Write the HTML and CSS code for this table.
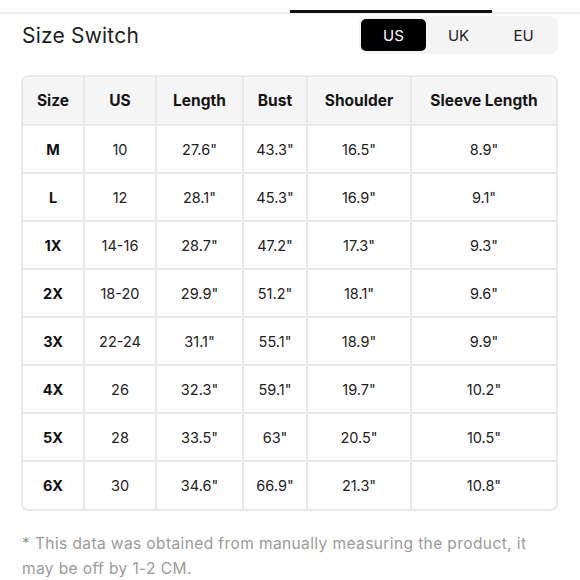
FILE: index.html
```html
<!DOCTYPE html>
<html>
<head>
<meta charset="utf-8">
<link rel="stylesheet" href="styles.css">
</head>
<body>
<div class="tabs"><div class="tab-indicator"></div></div>
<div class="head">
  <div class="title">Size Switch</div>
  <div class="switch">
    <span class="seg active">US</span>
    <span class="seg">UK</span>
    <span class="seg">EU</span>
  </div>
</div>
<div class="table-wrap">
  <table class="chart">
    <colgroup>
      <col class="c-size"><col class="c-us"><col class="c-len"><col class="c-bust"><col class="c-sh"><col class="c-sl">
    </colgroup>
    <thead>
      <tr><th>Size</th><th>US</th><th>Length</th><th>Bust</th><th>Shoulder</th><th>Sleeve Length</th></tr>
    </thead>
    <tbody>
      <tr><td class="sz">M</td><td>10</td><td>27.6"</td><td>43.3"</td><td>16.5"</td><td>8.9"</td></tr>
      <tr><td class="sz">L</td><td>12</td><td>28.1"</td><td>45.3"</td><td>16.9"</td><td>9.1"</td></tr>
      <tr><td class="sz">1X</td><td>14-16</td><td>28.7"</td><td>47.2"</td><td>17.3"</td><td>9.3"</td></tr>
      <tr><td class="sz">2X</td><td>18-20</td><td>29.9"</td><td>51.2"</td><td>18.1"</td><td>9.6"</td></tr>
      <tr><td class="sz">3X</td><td>22-24</td><td>31.1"</td><td>55.1"</td><td>18.9"</td><td>9.9"</td></tr>
      <tr><td class="sz">4X</td><td>26</td><td>32.3"</td><td>59.1"</td><td>19.7"</td><td>10.2"</td></tr>
      <tr><td class="sz">5X</td><td>28</td><td>33.5"</td><td>63"</td><td>20.5"</td><td>10.5"</td></tr>
      <tr><td class="sz">6X</td><td>30</td><td>34.6"</td><td>66.9"</td><td>21.3"</td><td>10.8"</td></tr>
    </tbody>
  </table>
</div>
<p class="note">* This data was obtained from manually measuring the product, it may be off by 1-2 CM.</p>
</body>
</html>
```
FILE: styles.css
```css
* { box-sizing: border-box; }
body {
  margin: 0;
  background: #fff;
  font-family: Inter, "Noto Sans", sans-serif;
  color: #1a1a1a;
}
.tabs {
  height: 14px;
  border-bottom: 2px solid #ececec;
  display: flex;
  align-items: flex-end;
}
.tab-indicator {
  margin-left: 290px;
  width: 202px;
  height: 3px;
  background: #111;
  margin-bottom: -1px;
}
.head {
  display: flex;
  justify-content: space-between;
  align-items: center;
  padding: 2px 22px 0 22px;
}
.title {
  font-size: 21px;
  font-weight: 400;
  color: #1e1e1e;
  letter-spacing: 0.2px;
}
.switch {
  display: flex;
  background: #f4f4f4;
  border-radius: 8px;
  padding: 3px 2px 3px 2px;
}
.seg {
  width: 65px;
  height: 32px;
  display: flex;
  align-items: center;
  justify-content: center;
  font-size: 15px;
  color: #222;
  border-radius: 5px;
}
.seg.active {
  background: #000;
  color: #fff;
}
.table-wrap {
  margin: 21px 22px 0 21px;
  border: 2px solid #e8e8e8;
  border-radius: 7px;
  overflow: hidden;
}
.chart {
  width: 100%;
  border-collapse: collapse;
  table-layout: fixed;
}
.c-size { width: 61px; }
.c-us { width: 72px; }
.c-len { width: 87px; }
.c-bust { width: 64px; }
.c-sh { width: 104px; }
.chart th, .chart td {
  border: 2px solid #e8e8e8;
  height: 48px;
  text-align: center;
  padding: 0;
}
.chart tr:first-child th { border-top: none; }
.chart tr:last-child td { border-bottom: none; }
.chart th:first-child, .chart td:first-child { border-left: none; }
.chart th:last-child, .chart td:last-child { border-right: none; }
.chart th {
  background: #f5f5f5;
  font-size: 15.5px;
  font-weight: 700;
  color: #151515;
}
.chart td {
  font-size: 14.5px;
  color: #222;
}
.chart td.sz {
  font-weight: 700;
  color: #111;
}
.note {
  margin: 20px 40px 0 22px;
  font-size: 15.5px;
  line-height: 25px;
  letter-spacing: 0.4px;
  color: #9a9a9a;
}
```
